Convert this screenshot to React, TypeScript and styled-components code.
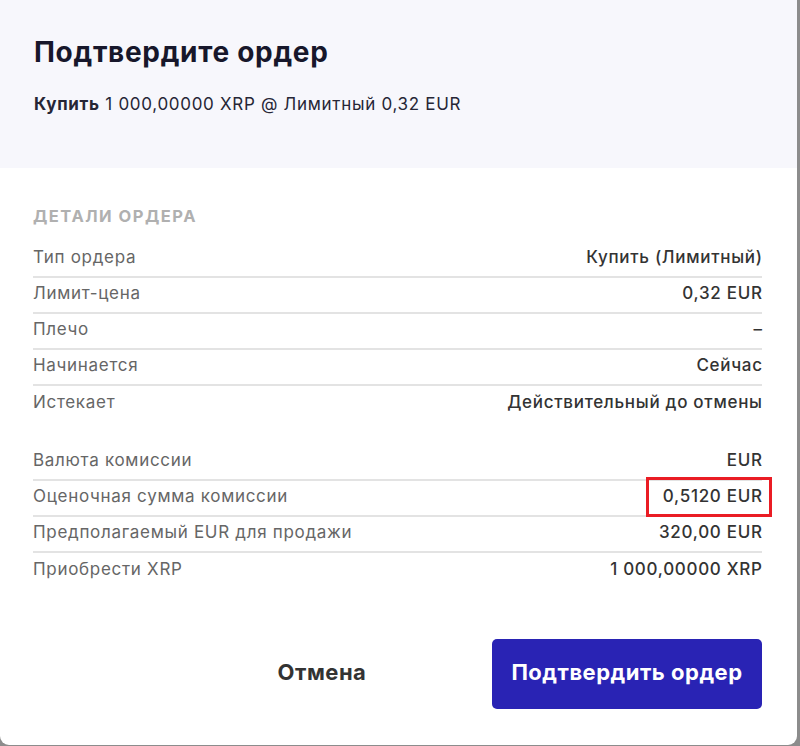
import React from 'react'
import styled, { createGlobalStyle } from 'styled-components'

const GlobalStyle = createGlobalStyle`
  html, body {
    margin: 0;
    padding: 0;
    background: #8c8c8c;
    font-family: Inter, "Open Sans", "Liberation Sans", sans-serif;
  }
`

type Row = { label: string; value: string; marked?: boolean }

const orderRows: Row[] = [
  { label: 'Тип ордера', value: 'Купить (Лимитный)' },
  { label: 'Лимит-цена', value: '0,32 EUR' },
  { label: 'Плечо', value: '–' },
  { label: 'Начинается', value: 'Сейчас' },
  { label: 'Истекает', value: 'Действительный до отмены' },
]

const feeRows: Row[] = [
  { label: 'Валюта комиссии', value: 'EUR' },
  { label: 'Оценочная сумма комиссии', value: '0,5120 EUR', marked: true },
  { label: 'Предполагаемый EUR для продажи', value: '320,00 EUR' },
  { label: 'Приобрести XRP', value: '1 000,00000 XRP' },
]

export default function App() {
  return (
    <>
      <GlobalStyle />
      <Modal>
        <Header>
          <Title>Подтвердите ордер</Title>
          <Summary>
            <b>Купить</b> 1 000,00000 XRP @ Лимитный 0,32 EUR
          </Summary>
        </Header>
        <Body>
          <SectionLabel>Детали ордера</SectionLabel>
          <Group>
            {orderRows.map((r) => (
              <DetailRow key={r.label}>
                <Label>{r.label}</Label>
                <Value>{r.value}</Value>
              </DetailRow>
            ))}
          </Group>
          <Group $spaced>
            {feeRows.map((r) => (
              <DetailRow key={r.label}>
                <Label>{r.label}</Label>
                <Value>{r.value}</Value>
                {r.marked && <Marker />}
              </DetailRow>
            ))}
          </Group>
        </Body>
        <Footer>
          <CancelButton>Отмена</CancelButton>
          <ConfirmButton>Подтвердить ордер</ConfirmButton>
        </Footer>
      </Modal>
    </>
  )
}

const Modal = styled.div`
  width: 797px;
  height: 745px;
  background: #ffffff;
  border-radius: 0 0 9px 9px;
  overflow: hidden;
  display: flex;
  flex-direction: column;
`

const Header = styled.div`
  background: #f7f7fc;
  padding: 34px 34px 52px;
`

const Title = styled.h1`
  margin: 0;
  font-size: 28px;
  line-height: 36px;
  font-weight: 700;
  letter-spacing: 0.7px;
  color: #17172b;
`

const Summary = styled.div`
  margin-top: 22px;
  font-size: 17px;
  line-height: 24px;
  letter-spacing: 0.7px;
  color: #262636;

  b {
    font-weight: 700;
  }
`

const Body = styled.div`
  padding: 38px 35px 0 33px;
`

const SectionLabel = styled.div`
  font-size: 16.5px;
  line-height: 20px;
  font-weight: 700;
  text-transform: uppercase;
  letter-spacing: 1.5px;
  color: #b0b0b0;
  margin-bottom: 16px;
`

const Group = styled.div<{ $spaced?: boolean }>`
  display: flex;
  flex-direction: column;
  margin-top: ${(p) => (p.$spaced ? '23px' : '0')};
`

const DetailRow = styled.div`
  position: relative;
  display: flex;
  justify-content: space-between;
  align-items: center;
  height: 36px;
  padding-bottom: 4px;
  box-sizing: border-box;
  font-size: 17px;
  letter-spacing: 0.7px;
  border-bottom: 2px solid #e3e3e3;

  &:last-child {
    border-bottom: none;
  }
`

const Label = styled.span`
  color: #666666;
`

const Value = styled.span`
  color: #333333;
  font-weight: 500;
  margin-right: -0.7px;
`

const Marker = styled.span`
  position: absolute;
  right: -10px;
  top: -4px;
  width: 126px;
  height: 40px;
  box-sizing: border-box;
  border: 3px solid #ea1c24;
  pointer-events: none;
`

const Footer = styled.div`
  margin-top: auto;
  display: flex;
  justify-content: flex-end;
  gap: 35px;
  padding: 0 35px 36px;
`

const CancelButton = styled.button`
  width: 270px;
  height: 70px;
  padding: 0 0 5px;
  border: none;
  background: transparent;
  font-family: inherit;
  font-size: 22px;
  font-weight: 700;
  letter-spacing: 0.5px;
  color: #333333;
`

const ConfirmButton = styled.button`
  width: 270px;
  height: 70px;
  padding: 0 0 5px;
  border: none;
  border-radius: 5px;
  background: #2923b4;
  font-family: inherit;
  font-size: 22px;
  font-weight: 700;
  letter-spacing: 0.5px;
  color: #ffffff;
`
